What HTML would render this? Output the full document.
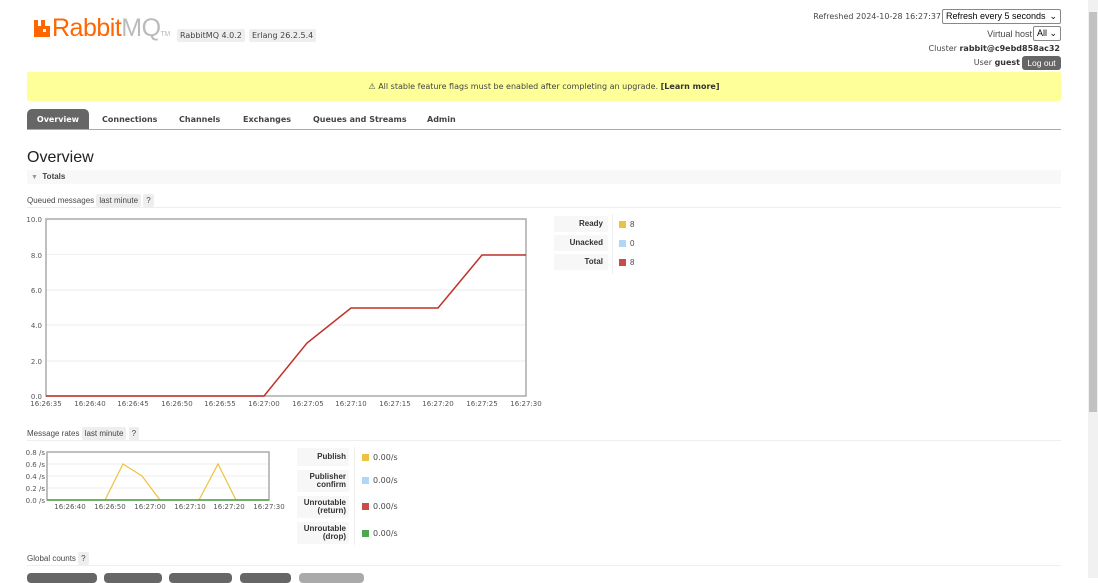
<!DOCTYPE html>
<html><head><meta charset="utf-8">
<style>
*{margin:0;padding:0;box-sizing:border-box}
body{width:1098px;height:578px;overflow:hidden;background:#fff;font-family:"Liberation Sans","DejaVu Sans",sans-serif;font-size:9px;color:#484848;position:relative}
.a{position:absolute;white-space:nowrap}
.tag{background:#eee;padding:2px 3px;border-radius:2px;color:#444}
.mono{font-family:"DejaVu Sans",sans-serif;font-size:8px}
b{color:#333}
.sel{border:1px solid #888;background:#fff;color:#000;font-size:9px;padding:1px 3px;border-radius:2px}
.lbl{background:#f7f7f7;text-align:right;color:#333;font-weight:bold;font-size:8px}
.sq{display:inline-block;width:7px;height:7px;margin-right:4px;vertical-align:-1px}
.tab{position:absolute;top:115px;font-weight:bold;font-size:8px;color:#444;font-family:"DejaVu Sans",sans-serif}
</style></head><body>
<div class="a" style="right:0;top:0;width:10px;height:578px;background:#f1f1f1"></div>
<div class="a" style="right:1px;top:12px;width:8px;height:400px;background:#c1c1c1"></div>

<svg class="a" style="left:33px;top:18px" width="20" height="20" viewBox="0 0 20 20"><path d="M1 2h4v6h3V2h4v6h5v11H1z" fill="#f60"/><rect x="10" y="11" width="3" height="3" fill="#fff"/></svg>
<div class="a" style="left:52px;top:14px;font-size:25px;color:#f60;letter-spacing:-0.5px">Rabbit<span style="color:#bbb">MQ</span><span style="font-size:7px;color:#bbb">TM</span></div>
<div class="a tag mono" style="left:177px;top:29px;font-size:8px">RabbitMQ 4.0.2</div>
<div class="a tag mono" style="left:249px;top:29px;font-size:8px">Erlang 26.2.5.4</div>

<div class="a mono" style="right:157px;top:12px">Refreshed 2024-10-28 16:27:37</div>
<div class="a sel" style="left:942px;top:9px;width:119px;height:15px;display:flex;justify-content:space-between">Refresh every 5 seconds <span>⌄</span></div>
<div class="a" style="right:66px;top:29px">Virtual host</div>
<div class="a sel" style="left:1033px;top:26px;width:28px;height:15px;display:flex;justify-content:space-between">All <span>⌄</span></div>
<div class="a mono" style="right:38px;top:44px">Cluster <b>rabbit@c9ebd858ac32</b></div>
<div class="a mono" style="right:78px;top:58px">User <b>guest</b></div>
<div class="a" style="left:1022px;top:56px;width:39px;height:14px;background:#666;color:#fff;border-radius:3px;font-size:8.5px;text-align:center;line-height:14px">Log out</div>

<div class="a mono" style="left:27px;top:72px;width:1034px;height:29px;background:#ffff99;border-radius:2px;text-align:center;line-height:29px;color:#444">⚠ All stable feature flags must be enabled after completing an upgrade. <b>[Learn more]</b></div>

<div class="a" style="left:27px;top:109px;width:62px;height:20px;background:#666;border-radius:5px 5px 0 0;color:#fff;font-weight:bold;text-align:center;line-height:21px;font-size:8px;font-family:'DejaVu Sans',sans-serif">Overview</div>
<div class="a" style="left:27px;top:129px;width:1034px;height:1px;background:#aaa"></div>
<div class="tab" style="left:102px">Connections</div>
<div class="tab" style="left:179px">Channels</div>
<div class="tab" style="left:243px">Exchanges</div>
<div class="tab" style="left:313px">Queues and Streams</div>
<div class="tab" style="left:427px">Admin</div>

<div class="a" style="left:27px;top:149px;font-size:16px;color:#222">Overview</div>
<div class="a" style="left:27px;top:170px;width:1034px;height:14px;background:#f8f8f8"></div>
<div class="a" style="left:31px;top:172px;font-weight:bold;font-size:8px;color:#444"><span style="color:#999;font-size:7px">▼</span>&nbsp; Totals</div>

<div class="a" style="left:27px;top:196px;font-size:8px">Queued messages <span class="tag">last minute</span> <span class="tag">?</span></div>
<div class="a" style="left:27px;top:207px;width:1034px;height:1px;background:#eee"></div>

<svg class="a" style="left:0;top:210px" width="545" height="200">
<g stroke="#eee" stroke-width="1">
<line x1="46" y1="44.4" x2="526" y2="44.4"/><line x1="46" y1="80" x2="526" y2="80"/><line x1="46" y1="115" x2="526" y2="115"/><line x1="46" y1="151" x2="526" y2="151"/></g>
<rect x="46" y="9" width="480" height="177" fill="none" stroke="#aaa" stroke-width="1.5"/>
<g font-family="DejaVu Sans" font-size="7" fill="#555">
<text x="42" y="12" text-anchor="end">10.0</text><text x="42" y="48" text-anchor="end">8.0</text><text x="42" y="83" text-anchor="end">6.0</text><text x="42" y="118" text-anchor="end">4.0</text><text x="42" y="154" text-anchor="end">2.0</text><text x="42" y="189" text-anchor="end">0.0</text>
<g text-anchor="middle">
<text x="46" y="196">16:26:35</text><text x="90" y="196">16:26:40</text><text x="133" y="196">16:26:45</text><text x="177" y="196">16:26:50</text><text x="220" y="196">16:26:55</text><text x="264" y="196">16:27:00</text><text x="308" y="196">16:27:05</text><text x="351" y="196">16:27:10</text><text x="395" y="196">16:27:15</text><text x="438" y="196">16:27:20</text><text x="482" y="196">16:27:25</text><text x="526" y="196">16:27:30</text></g></g>
<polyline points="46,186 264,186 307,133 351,98 438,98 482,45 526,45" fill="none" stroke="#c0302a" stroke-width="1.5"/>
</svg>

<div class="a lbl" style="left:554px;top:216px;width:54px;height:16px;line-height:16px;padding-right:5px">Ready</div>
<div class="a lbl" style="left:554px;top:235px;width:54px;height:16px;line-height:16px;padding-right:5px">Unacked</div>
<div class="a lbl" style="left:554px;top:254px;width:54px;height:16px;line-height:16px;padding-right:5px">Total</div>
<div class="a" style="left:612px;top:214px;width:1px;height:60px;background:#eee"></div>
<div class="a" style="left:619px;top:220px;font-size:8px"><span class="sq" style="background:#edc240"></span>8</div>
<div class="a" style="left:619px;top:239px;font-size:8px"><span class="sq" style="background:#afd8f8"></span>0</div>
<div class="a" style="left:619px;top:258px;font-size:8px"><span class="sq" style="background:#cb4b4b"></span>8</div>

<div class="a" style="left:27px;top:429px;font-size:8px">Message rates <span class="tag">last minute</span> <span class="tag">?</span></div>
<div class="a" style="left:27px;top:440px;width:1034px;height:1px;background:#eee"></div>

<svg class="a" style="left:0;top:445px" width="295" height="70">
<g stroke="#eee"><line x1="47" y1="19" x2="269" y2="19"/><line x1="47" y1="31" x2="269" y2="31"/><line x1="47" y1="43" x2="269" y2="43"/></g>
<rect x="47" y="7" width="222" height="48" fill="none" stroke="#aaa" stroke-width="1.5"/>
<g font-family="DejaVu Sans" font-size="7" fill="#555">
<g text-anchor="end"><text x="45" y="10">0.8 /s</text><text x="45" y="22">0.6 /s</text><text x="45" y="34">0.4 /s</text><text x="45" y="46">0.2 /s</text><text x="45" y="58">0.0 /s</text></g>
<g text-anchor="middle"><text x="70" y="64">16:26:40</text><text x="110" y="64">16:26:50</text><text x="150" y="64">16:27:00</text><text x="190" y="64">16:27:10</text><text x="229" y="64">16:27:20</text><text x="269" y="64">16:27:30</text></g></g>
<polyline points="47,55 105,55 123,19 142,31 160,55 199,55 218,19 236,55 269,55" fill="none" stroke="#edc240" stroke-width="1.2"/>
<line x1="47" y1="55" x2="269" y2="55" stroke="#4da74d" stroke-width="1.5"/>
</svg>

<div class="a lbl" style="left:297px;top:448px;width:52px;height:18px;line-height:18px;padding-right:3px">Publish</div>
<div class="a lbl" style="left:297px;top:470px;width:52px;height:22px;line-height:8px;padding:3px 3px 0 0">Publisher<br>confirm</div>
<div class="a lbl" style="left:297px;top:496px;width:52px;height:22px;line-height:8px;padding:3px 3px 0 0">Unroutable<br>(return)</div>
<div class="a lbl" style="left:297px;top:522px;width:52px;height:22px;line-height:8px;padding:3px 3px 0 0">Unroutable<br>(drop)</div>
<div class="a" style="left:354px;top:447px;width:1px;height:98px;background:#eee"></div>
<div class="a mono" style="left:362px;top:453px"><span class="sq" style="background:#edc240"></span>0.00/s</div>
<div class="a mono" style="left:362px;top:476px"><span class="sq" style="background:#afd8f8"></span>0.00/s</div>
<div class="a mono" style="left:362px;top:502px"><span class="sq" style="background:#cb4b4b"></span>0.00/s</div>
<div class="a mono" style="left:362px;top:529px"><span class="sq" style="background:#4da74d"></span>0.00/s</div>

<div class="a" style="left:27px;top:554px;font-size:8px">Global counts <span class="tag">?</span></div>
<div class="a" style="left:27px;top:565px;width:1034px;height:1px;background:#eee"></div>
<div class="a" style="left:27px;top:573px;width:70px;height:10px;background:#666;border-radius:4px"></div>
<div class="a" style="left:104px;top:573px;width:58px;height:10px;background:#666;border-radius:4px"></div>
<div class="a" style="left:169px;top:573px;width:63px;height:10px;background:#666;border-radius:4px"></div>
<div class="a" style="left:240px;top:573px;width:51px;height:10px;background:#666;border-radius:4px"></div>
<div class="a" style="left:299px;top:573px;width:65px;height:10px;background:#aaa;border-radius:4px"></div>
</body></html>
